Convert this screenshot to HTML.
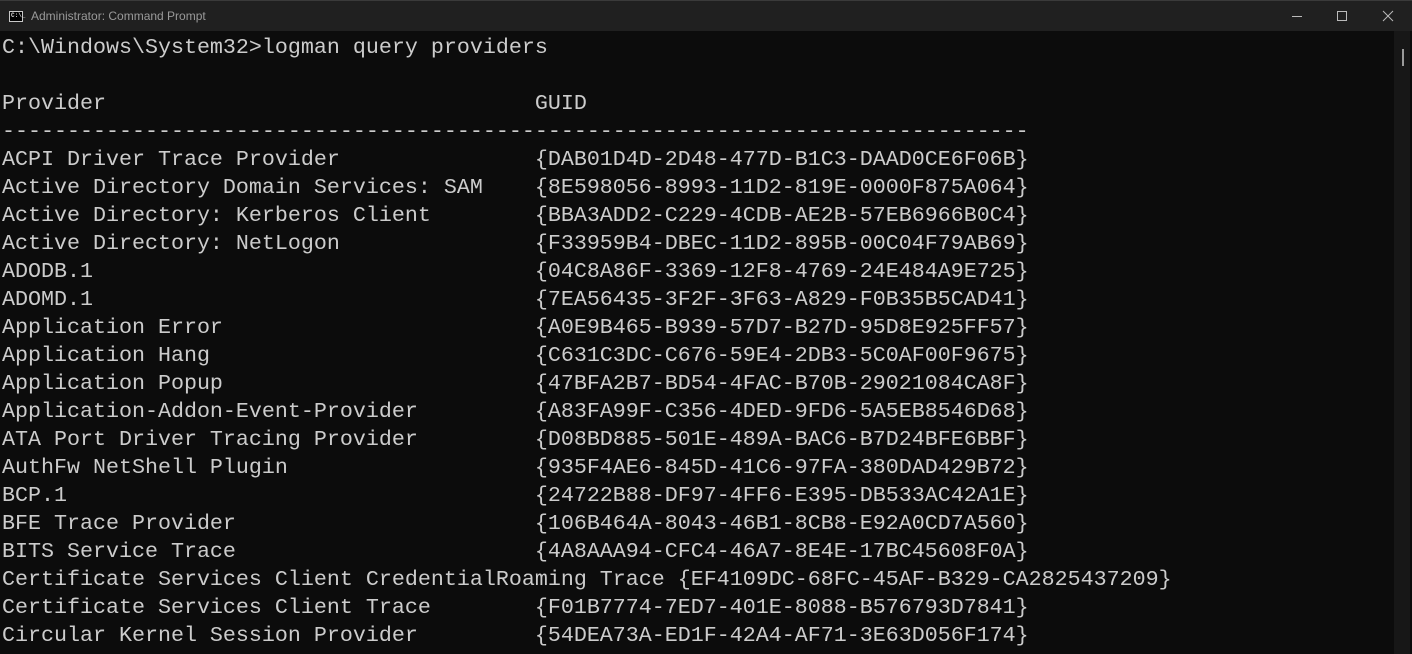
<!DOCTYPE html>
<html><head><style>
html,body{margin:0;padding:0;width:1412px;height:654px;overflow:hidden;background:#0c0c0c}
.title{position:absolute;left:0;top:0;width:1412px;height:31px;background:#202020;border-top:1px solid #3a3a3a;box-sizing:border-box}
.title .t{position:absolute;left:31px;top:8px;font:12px "Liberation Sans",sans-serif;color:#9a9a9a}
.icon{position:absolute;left:9px;top:10px;width:14px;height:11px;background:#000;border:1px solid #c8c8c8;box-sizing:border-box}
.icon span{position:absolute;left:1px;top:1px;font:bold 6px "Liberation Mono",monospace;color:#ddd;line-height:6px}
pre{position:absolute;left:2px;top:34px;margin:0;font-family:"Liberation Mono",monospace;font-size:21.67px;line-height:28px;color:#cccccc;white-space:pre}
.sb{position:absolute;left:1394px;top:31px;width:16px;height:623px;background:#171717}
.thumb{position:absolute;left:1402px;top:49px;width:2px;height:17px;background:#9a9a9a}
</style></head><body>
<div class="title"><div class="icon"><span>C:\_</span></div><div class="t">Administrator: Command Prompt</div>
<svg style="position:absolute;left:1250px;top:0" width="162" height="31">
<line x1="42" y1="15.5" x2="52" y2="15.5" stroke="#bbb" stroke-width="1"/>
<rect x="87.5" y="10.5" width="9" height="9" fill="none" stroke="#bbb"/>
<line x1="133" y1="10" x2="143" y2="20" stroke="#bbb"/><line x1="143" y1="10" x2="133" y2="20" stroke="#bbb"/>
</svg></div>
<div class="sb"></div><div class="thumb"></div>
<pre>C:\Windows\System32&gt;logman query providers

Provider                                 GUID
-------------------------------------------------------------------------------
ACPI Driver Trace Provider               {DAB01D4D-2D48-477D-B1C3-DAAD0CE6F06B}
Active Directory Domain Services: SAM    {8E598056-8993-11D2-819E-0000F875A064}
Active Directory: Kerberos Client        {BBA3ADD2-C229-4CDB-AE2B-57EB6966B0C4}
Active Directory: NetLogon               {F33959B4-DBEC-11D2-895B-00C04F79AB69}
ADODB.1                                  {04C8A86F-3369-12F8-4769-24E484A9E725}
ADOMD.1                                  {7EA56435-3F2F-3F63-A829-F0B35B5CAD41}
Application Error                        {A0E9B465-B939-57D7-B27D-95D8E925FF57}
Application Hang                         {C631C3DC-C676-59E4-2DB3-5C0AF00F9675}
Application Popup                        {47BFA2B7-BD54-4FAC-B70B-29021084CA8F}
Application-Addon-Event-Provider         {A83FA99F-C356-4DED-9FD6-5A5EB8546D68}
ATA Port Driver Tracing Provider         {D08BD885-501E-489A-BAC6-B7D24BFE6BBF}
AuthFw NetShell Plugin                   {935F4AE6-845D-41C6-97FA-380DAD429B72}
BCP.1                                    {24722B88-DF97-4FF6-E395-DB533AC42A1E}
BFE Trace Provider                       {106B464A-8043-46B1-8CB8-E92A0CD7A560}
BITS Service Trace                       {4A8AAA94-CFC4-46A7-8E4E-17BC45608F0A}
Certificate Services Client CredentialRoaming Trace {EF4109DC-68FC-45AF-B329-CA2825437209}
Certificate Services Client Trace        {F01B7774-7ED7-401E-8088-B576793D7841}
Circular Kernel Session Provider         {54DEA73A-ED1F-42A4-AF71-3E63D056F174}</pre>
</body></html>
